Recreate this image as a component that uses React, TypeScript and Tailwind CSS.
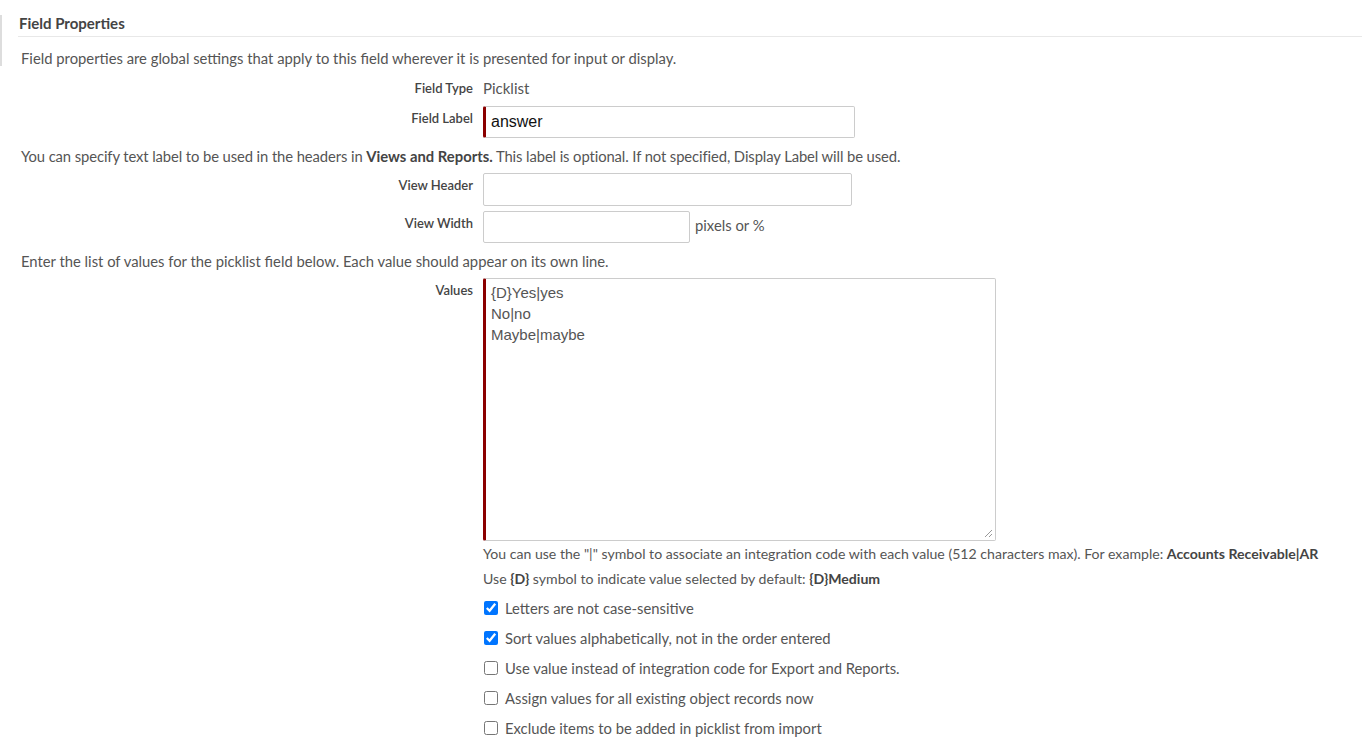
import React from 'react'

const labelCls =
  'w-[483px] shrink-0 pr-[10px] text-right text-[13px] leading-[20px] font-semibold text-[#444]'

function Row({
  label,
  children,
  className = '',
}: {
  label: string
  children: React.ReactNode
  className?: string
}) {
  return (
    <div className={`flex items-start ${className}`}>
      <div className={labelCls}>{label}</div>
      {children}
    </div>
  )
}

const options = [
  { label: 'Letters are not case-sensitive', checked: true },
  { label: 'Sort values alphabetically, not in the order entered', checked: true },
  { label: 'Use value instead of integration code for Export and Reports.', checked: false },
  { label: 'Assign values for all existing object records now', checked: false },
  { label: 'Exclude items to be added in picklist from import', checked: false },
]

export default function App() {
  return (
    <div className="relative min-h-[753px] w-[1362px] bg-white font-['Lato','Noto_Sans',sans-serif] text-[14.8px] text-[#555]">
      <div className="absolute left-0 top-[15px] h-[51px] w-[2px] bg-[#ddd]" />
      <div className="ml-[18px] border-b border-[#e8e8e8] pt-[13px] pb-[3px] pl-px text-[15px] leading-[20px] font-bold text-[#444]">
        Field Properties
      </div>
      <div className="pl-[21px] pt-[11px] leading-[20px]">
        Field properties are global settings that apply to this field wherever it is presented for input or display.
      </div>
      <Row label="Field Type" className="mt-[10px]">
        <div className="leading-[20px] text-[15px]">Picklist</div>
      </Row>
      <Row label="Field Label" className="mt-[10px]">
        <div className="-mt-[2px] flex h-[32px] w-[372px] items-center rounded-[2px] border border-[#ccc] border-l-[3px] border-l-[#8b0000] pl-[5px] font-['Liberation_Sans',Arial,sans-serif] text-[16px] text-[#111]">
          answer
        </div>
      </Row>
      <div className="pl-[21px] pt-[8px] leading-[20px] tracking-[-0.1px]">
        You can specify text label to be used in the headers in{' '}
        <b className="font-bold text-[#444] tracking-normal">Views and Reports.</b> This label is optional. If not specified, Display Label will be used.
      </div>
      <Row label="View Header" className="mt-[9px]">
        <div className="-mt-[2px] h-[33px] w-[369px] rounded-[2px] border border-[#ccc]" />
      </Row>
      <Row label="View Width" className="mt-[7px]">
        <div className="-mt-[2px] flex items-center">
          <div className="h-[32px] w-[207px] rounded-[2px] border border-[#ccc]" />
          <span className="ml-[5px] -mt-[3px]">pixels or %</span>
        </div>
      </Row>
      <div className="pl-[21px] pt-[8px] leading-[20px]">
        Enter the list of values for the picklist field below. Each value should appear on its own line.
      </div>
      <Row label="Values" className="mt-[9px]">
        <div className="relative -mt-[2px] h-[263px] w-[513px] rounded-[2px] border border-[#ccc] border-l-[3px] border-l-[#8b0000] px-[5px] pt-[3px] font-['Liberation_Sans',Arial,sans-serif] text-[15px] leading-[21px] text-[#555]">
          <div>{'{D}Yes|yes'}</div>
          <div>No|no</div>
          <div>Maybe|maybe</div>
          <svg className="absolute bottom-[2px] right-[2px]" width="9" height="9" viewBox="0 0 9 9">
            <path d="M8 1L1 8M8 5L5 8" stroke="#999" strokeWidth="1" />
          </svg>
        </div>
      </Row>
      <div className="ml-[483px] text-[14.1px] leading-[25px]">
        <div>
          You can use the "|" symbol to associate an integration code with each value (512 characters max). For example:{' '}
          <b className="font-bold text-[#444]">Accounts Receivable|AR</b>
        </div>
        <div>
          Use <b className="font-bold text-[#444]">{'{D}'}</b> symbol to indicate value selected by default:{' '}
          <b className="font-bold text-[#444]">{'{D}Medium'}</b>
        </div>
      </div>
      <div className="ml-[484px] mt-[2px] flex flex-col">
        {options.map((o) => (
          <label key={o.label} className="flex h-[30px] items-center gap-[7px]">
            <input
              type="checkbox"
              defaultChecked={o.checked}
              className="m-0 h-[14px] w-[14px] accent-[#0075ff]"
            />
            <span>{o.label}</span>
          </label>
        ))}
      </div>
    </div>
  )
}
